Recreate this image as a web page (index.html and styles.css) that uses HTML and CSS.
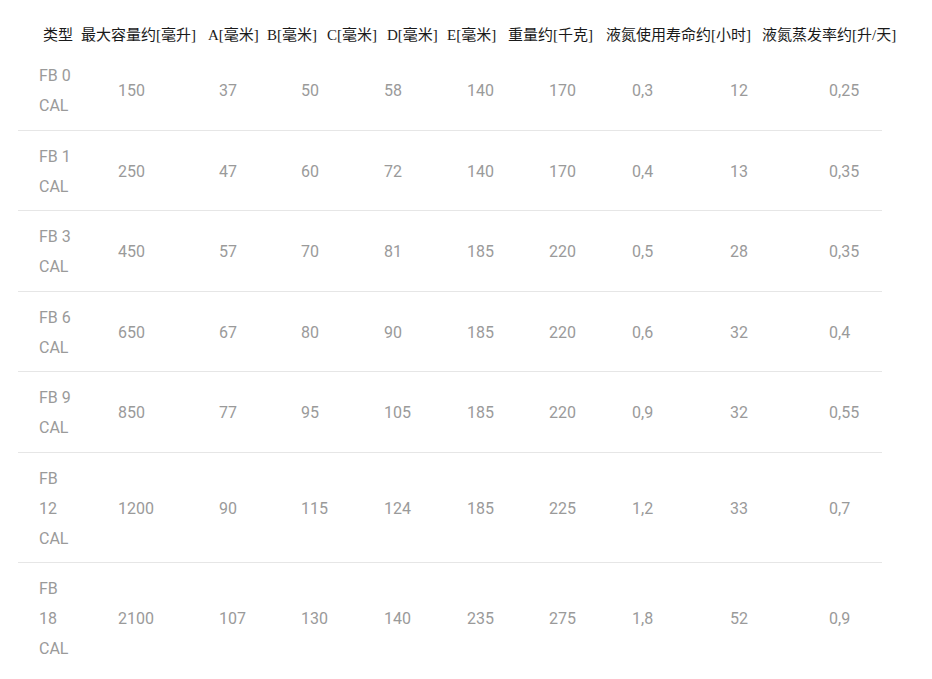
FILE: index.html
```html
<!DOCTYPE html>
<html lang="zh">
<head>
<meta charset="utf-8">
<link rel="stylesheet" href="styles.css">
</head>
<body>
<div class="page">
  <div class="head">
    <span>类型</span>
    <span>最大容量约[毫升]</span>
    <span>A[毫米]</span>
    <span>B[毫米]</span>
    <span>C[毫米]</span>
    <span>D[毫米]</span>
    <span>E[毫米]</span>
    <span>重量约[千克]</span>
    <span>液氮使用寿命约[小时]</span>
    <span>液氮蒸发率约[升/天]</span>
  </div>
  <table class="spec">
    <colgroup>
      <col class="c1"><col class="c2"><col class="c3"><col class="c4"><col class="c5"><col class="c6"><col class="c7"><col class="c8"><col class="c9"><col class="c10">
    </colgroup>
    <tbody>
      <tr><td>FB 0 CAL</td><td>150</td><td>37</td><td>50</td><td>58</td><td>140</td><td>170</td><td>0,3</td><td>12</td><td>0,25</td></tr>
      <tr><td>FB 1 CAL</td><td>250</td><td>47</td><td>60</td><td>72</td><td>140</td><td>170</td><td>0,4</td><td>13</td><td>0,35</td></tr>
      <tr><td>FB 3 CAL</td><td>450</td><td>57</td><td>70</td><td>81</td><td>185</td><td>220</td><td>0,5</td><td>28</td><td>0,35</td></tr>
      <tr><td>FB 6 CAL</td><td>650</td><td>67</td><td>80</td><td>90</td><td>185</td><td>220</td><td>0,6</td><td>32</td><td>0,4</td></tr>
      <tr><td>FB 9 CAL</td><td>850</td><td>77</td><td>95</td><td>105</td><td>185</td><td>220</td><td>0,9</td><td>32</td><td>0,55</td></tr>
      <tr><td>FB 12 CAL</td><td>1200</td><td>90</td><td>115</td><td>124</td><td>185</td><td>225</td><td>1,2</td><td>33</td><td>0,7</td></tr>
      <tr><td>FB 18 CAL</td><td>2100</td><td>107</td><td>130</td><td>140</td><td>235</td><td>275</td><td>1,8</td><td>52</td><td>0,9</td></tr>
    </tbody>
  </table>
</div>
</body>
</html>
```

FILE: styles.css
```css
html, body {
  margin: 0;
  padding: 0;
  background: #ffffff;
}

.page {
  padding: 25px 0 0 18px;
}

.head {
  display: flex;
  align-items: flex-start;
  padding-left: 25px;
  height: 25px;
  font-family: "Liberation Serif", "Noto Sans CJK SC", serif;
  font-size: 15px;
  line-height: 20px;
  color: #1a1a1a;
  white-space: nowrap;
}

.head span { flex: none; }
.head span:nth-child(1) { width: 38px; }
.head span:nth-child(2) { width: 127px; }
.head span:nth-child(3) { width: 59px; }
.head span:nth-child(4) { width: 60px; }
.head span:nth-child(5) { width: 60px; }
.head span:nth-child(6) { width: 60px; }
.head span:nth-child(7) { width: 61px; }
.head span:nth-child(8) { width: 98px; }
.head span:nth-child(9) { width: 156px; }
.head span:nth-child(10) { width: 150px; }

.spec {
  border-collapse: collapse;
  table-layout: fixed;
  width: 864px;
  font-family: Roboto, "Noto Sans", sans-serif;
  font-size: 16px;
  line-height: 30px;
  color: #9a9a9a;
}

.spec td {
  padding: 11px 20px 8.5px 21px;
  vertical-align: middle;
  border-bottom: 1px solid #e6e6e6;
}

.spec tr:last-child td {
  border-bottom: none;
}

.c1 { width: 79px; }
.c2 { width: 101px; }
.c3 { width: 82px; }
.c4 { width: 83px; }
.c5 { width: 83px; }
.c6 { width: 82px; }
.c7 { width: 83px; }
.c8 { width: 98px; }
.c9 { width: 99px; }
.c10 { width: 74px; }
```
